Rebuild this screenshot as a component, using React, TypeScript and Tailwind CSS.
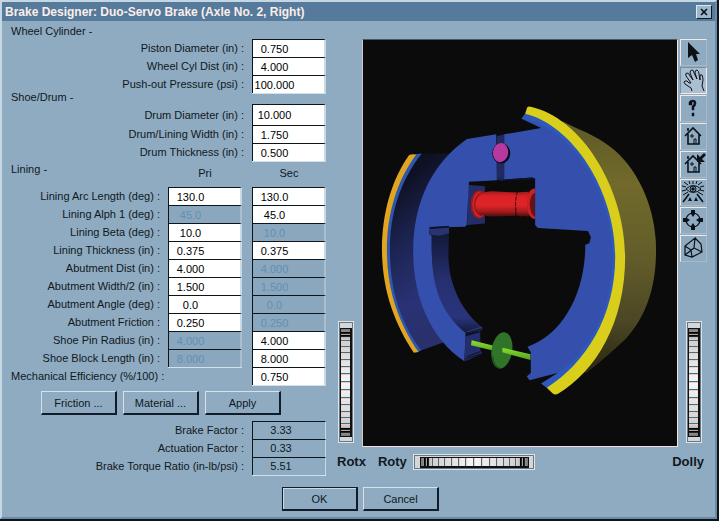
import { useState } from "react";
import type { ReactNode } from "react";
import clsx from "clsx";

interface Row {
  id: string;
  label: string;
  pri?: string;
  sec: string;
  priOff?: boolean;
  secOff?: boolean;
  tall?: boolean;
}

const wheelCylinder: Row[] = [
  { id: "piston", label: "Piston Diameter (in) :", sec: "0.750" },
  { id: "cyl-dist", label: "Wheel Cyl Dist (in) :", sec: "4.000" },
  { id: "push-out", label: "Push-out Pressure (psi) :", sec: "100.000" },
];

const shoeDrum: Row[] = [
  { id: "drum-dia", label: "Drum Diameter (in) :", sec: "10.000", tall: true },
  { id: "drum-width", label: "Drum/Lining Width (in) :", sec: "1.750" },
  { id: "drum-thick", label: "Drum Thickness (in) :", sec: "0.500" },
];

const lining: Row[] = [
  { id: "arc", label: "Lining Arc Length (deg) :", pri: "130.0", sec: "130.0" },
  { id: "alph", label: "Lining Alph 1 (deg) :", pri: "45.0", sec: "45.0", priOff: true },
  { id: "beta", label: "Lining Beta (deg) :", pri: "10.0", sec: "10.0", secOff: true },
  { id: "thick", label: "Lining Thickness (in) :", pri: "0.375", sec: "0.375" },
  { id: "ab-dist", label: "Abutment Dist (in) :", pri: "4.000", sec: "4.000", secOff: true },
  { id: "ab-width", label: "Abutment Width/2 (in) :", pri: "1.500", sec: "1.500", secOff: true },
  { id: "ab-angle", label: "Abutment Angle (deg) :", pri: "0.0", sec: "0.0", secOff: true },
  { id: "ab-fric", label: "Abutment Friction :", pri: "0.250", sec: "0.250", secOff: true },
  { id: "pin", label: "Shoe Pin Radius (in) :", pri: "4.000", sec: "4.000", priOff: true },
  { id: "block", label: "Shoe Block Length (in) :", pri: "8.000", sec: "8.000", priOff: true },
];

const results = [
  { id: "bf", label: "Brake Factor :", value: "3.33" },
  { id: "af", label: "Actuation Factor :", value: "0.33" },
  { id: "btr", label: "Brake Torque Ratio (in-lb/psi) :", value: "5.51" },
];

function Field({ id, value, off, name }: { id: string; value: string; off?: boolean; name?: string }) {
  const [text, setText] = useState(value);
  return (
    <input
      id={id}
      type="text"
      aria-label={name}
      value={text}
      disabled={off}
      onChange={(e) => setText(e.target.value)}
      className={clsx(
        "h-full w-[74px] border-t border-r-2 border-l border-t-[#0c141c] border-l-[#0c141c] pr-7 text-center shadow-[0_1px_#d3e0e8] outline-none",
        off ? "border-r-[#a9bfd0] bg-[#8ba7be] text-[#6090b4]" : "border-r-[#c9dae4] bg-white text-black"
      )}
    />
  );
}

function FieldRow({ row }: { row: Row }) {
  const two = row.pri !== undefined;
  return (
    <div className={clsx("flex items-center", row.tall ? "h-[21px]" : "h-[18px]")}>
      <label htmlFor={two ? `${row.id}-pri` : row.id} className="flex-1 pr-2 text-right">
        {row.label}
      </label>
      {two && (
        <div className="mr-[10px] h-full">
          <Field id={`${row.id}-pri`} value={row.pri!} off={row.priOff} />
        </div>
      )}
      <Field
        id={two ? `${row.id}-sec` : row.id}
        value={row.sec}
        off={row.secOff}
        name={two ? `${row.label} Sec` : undefined}
      />
    </div>
  );
}

function PushButton({ children, main }: { children: ReactNode; main?: boolean }) {
  return (
    <button
      className={clsx(
        "h-6 w-[76px] border-t border-r-2 border-b-2 border-l border-r-[#101c28] border-b-[#101c28]",
        main ? "border-t-[#101c28] border-l-[#101c28] shadow-[inset_1px_1px_#c9dae6]" : "border-t-[#d5e2ea] border-l-[#d5e2ea]"
      )}
    >
      {children}
    </button>
  );
}

const ridges = [3, 6, 11, 17, 23, 30, 37, 44, 52, 60, 68, 75, 82, 88, 94, 99, 102];

// thumb wheel, drawn upright or lying flat
function ThumbWheel({ label, flat }: { label: string; flat?: boolean }) {
  return (
    <button
      aria-label={label}
      className={clsx(
        "border border-[#f4ddd6] bg-[#d3d7da] outline-1 -outline-offset-2 outline-[#4f7f96]",
        flat ? "h-4 w-[122px]" : "h-[122px] w-4"
      )}
    >
      <svg viewBox={flat ? "0 0 120 14" : "0 0 14 120"} className="block h-full w-full" shapeRendering="crispEdges">
        <defs>
          <linearGradient id={flat ? "whH" : "whV"} x1="0" y1="0" x2={flat ? "1" : "0"} y2={flat ? "0" : "1"}>
            <stop offset="0" stopColor="#777" />
            <stop offset=".1" stopColor="#cfcfcf" />
            <stop offset=".5" stopColor="#f6f6f6" />
            <stop offset=".9" stopColor="#cfcfcf" />
            <stop offset="1" stopColor="#777" />
          </linearGradient>
        </defs>
        {flat ? (
          <>
            <rect x="6" y="2" width="109" height="11" fill="#111" />
            <rect x="7" y="3" width="107" height="8" fill="url(#whH)" />
            {ridges.map((r) => (
              <g key={r}>
                <rect x={r + 7} y="3" width="1" height="8" fill={r < 8 || r > 96 ? "#000" : "#3f7186"} />
                <rect x={r + 8} y="3" width="1" height="8" fill={r < 8 || r > 96 ? "#222" : "#f2c9bd"} />
              </g>
            ))}
          </>
        ) : (
          <>
            <rect x="1" y="6" width="12" height="109" fill="#111" />
            <rect x="2" y="7" width="9" height="107" fill="url(#whV)" />
            {ridges.map((r) => (
              <g key={r}>
                <rect x="2" y={r + 7} width="9" height="1" fill={r < 8 || r > 96 ? "#000" : "#3f7186"} />
                <rect x="2" y={r + 8} width="9" height="1" fill={r < 8 || r > 96 ? "#222" : "#f2c9bd"} />
              </g>
            ))}
          </>
        )}
      </svg>
    </button>
  );
}

function BrakeModel() {
  return (
    <svg viewBox="9 -150 945 1218" className="block h-[406px] w-full" role="img" aria-label="Duo-servo brake">
      <defs>
        <linearGradient id="inner" x1="0" y1="0" x2=".25" y2="1">
          <stop offset="0" stopColor="#0b0b0c" />
          <stop offset=".2" stopColor="#0f1226" />
          <stop offset=".5" stopColor="#1d2554" />
          <stop offset=".8" stopColor="#2a3276" />
          <stop offset="1" stopColor="#29306c" />
        </linearGradient>
        <linearGradient id="lip" x1="0" y1="0" x2="0" y2="1">
          <stop offset="0" stopColor="#10152e" />
          <stop offset=".5" stopColor="#262f70" />
          <stop offset=".85" stopColor="#2a347c" />
          <stop offset="1" stopColor="#141a3a" />
        </linearGradient>
        <linearGradient id="drum" x1="0" y1="0" x2="0" y2="1">
          <stop offset="0" stopColor="#5e5a28" />
          <stop offset=".25" stopColor="#716a2a" />
          <stop offset=".55" stopColor="#625c2a" />
          <stop offset=".8" stopColor="#4b4624" />
          <stop offset="1" stopColor="#29270f" />
        </linearGradient>
        <linearGradient id="red" x1="0" y1="0" x2="0" y2="1">
          <stop offset="0" stopColor="#a01a1c" />
          <stop offset=".2" stopColor="#dc2226" />
          <stop offset=".55" stopColor="#de2428" />
          <stop offset=".8" stopColor="#a81c1e" />
          <stop offset="1" stopColor="#4c0e10" />
        </linearGradient>
        <linearGradient id="rod" x1="0" y1="0" x2="0" y2="1">
          <stop offset="0" stopColor="#8ce02c" />
          <stop offset="1" stopColor="#4f9f22" />
        </linearGradient>
      </defs>
      <rect x="9" y="-150" width="945" height="1218" fill="#0b0b0b" />

      {/* left lining and inside of the drum */}
      <path d="M183 190L270 190L240 300L200 500L252 758L181 783C118 700 88 600 88 480C88 370 125 265 183 190Z" fill="url(#inner)" />
      <path d="M166 192L186 190C122 270 90 370 90 480C90 600 122 700 184 782L174 788C112 700 80 600 80 480C80 370 108 265 166 192Z" fill="#2d58b0" />
      <path d="M148 194Q158 190 169 193C112 270 81 370 81 480C81 600 116 700 176 787L162 789C103 700 66 600 66 475C67 370 94 270 148 194Z" fill="#e2a51f" />

      {/* drum outside */}
      <path d="M608 92C660 120 705 132 750 167C835 230 884 345 890 450C896 570 870 670 800 747C760 785 720 820 680 850L600 800L760 500L690 200Z" fill="url(#drum)" />

      {/* recess behind the wheel cylinder */}
      <path d="M412 138L434 132V270H412Z" fill="#202a62" />
      <path d="M322 275L527 264V412L318 408Z" fill="#0b0b0b" />
      <path d="M326 284L376 288V400L322 405Z" fill="#252d66" />
      <path d="M412 268L425 272L450 268L434 262H412Z" fill="#1b2458" />

      {/* primary shoe */}
      <path d="M322 146L410 132L412 270L328 275L321 405L316 410L210 412L216 440L216 480C220 600 250 670 318 728L314 815C210 745 160 620 160 485C160 330 222 215 322 146Z" fill="#344fac" />
      <path d="M209 412L268 408L266 500C268 590 310 670 368 713L362 722L318 730C250 675 216 600 216 480V438L208 432Z" fill="url(#lip)" />
      <path d="M209 414L268 410V430L240 437L210 434Z" fill="#293372" />
      <path d="M209 411L268 408V412L212 417Z" fill="#0d1126" />
      <path d="M318 726L364 710L368 714V720L324 731Z" fill="#2b3678" />
      <path d="M316 738L362 724V780L368 792L316 815Z" fill="#252e6c" />
      <path d="M318 731L366 717M318 738L362 726M322 801L362 786M318 808L366 792" stroke="#0c1024" strokeWidth="3" fill="none" />

      {/* wheel cylinder */}
      <ellipse cx="358" cy="343" rx="25" ry="42" fill="#9a1a1c" />
      <ellipse cx="362" cy="343" rx="24" ry="39" fill="#d92226" />
      <path d="M362 313Q372 304 400 303L468 307V377L400 379Q372 378 362 374Q343 360 343 343Q343 325 362 313Z" fill="url(#red)" />
      <path d="M466 307L508 305V379L470 377Z" fill="url(#red)" />
      <path d="M371 304Q345 318 345 343Q345 368 368 379" stroke="#8f1719" strokeWidth="4" fill="none" />
      <path d="M474 304Q463 340 473 376L488 382" stroke="#3c0b0c" strokeWidth="3" strokeDasharray="12 4" fill="none" />
      <path d="M527 294Q503 296 502 340Q503 384 527 387Z" fill="#c92024" />
      <path d="M527 308Q512 312 511 343Q513 375 527 380Z" fill="#651416" />

      {/* secondary shoe */}
      <path d="M434 132L545 113L486 85L497 70C640 90 770 300 770 500C770 680 690 830 562 895L545 882L594 850L510 872L502 860L514 850V788L504 771C610 735 678 610 678 464L690 460L695 442L686 423L535 414L527 405V265L518 262L434 268Z" fill="#344fac" />
      <path d="M434 268L518 262L527 268L434 271Z" fill="#0e132c" />
      <ellipse cx="425" cy="189" rx="27" ry="31" fill="#0a0c18" />
      <ellipse cx="423" cy="187" rx="23" ry="29" fill="#b7389f" transform="rotate(8 423 187)" />

      {/* secondary lining */}
      <path d="M486 85L497 70C640 100 768 300 768 500C768 680 680 830 562 895L546 882C680 815 760 670 760 500C760 310 640 110 486 85Z" fill="#2d59bd" />
      <path d="M510 48C670 80 798 300 798 500C798 700 710 845 596 913Q587 917 580 912L562 895C680 820 768 680 768 500C768 300 640 105 497 70L503 51Q506 48 510 48Z" fill="#d9ce1c" />

      {/* adjuster */}
      <path d="M336 752L430 775V790L334 767Z" fill="url(#rod)" />
      <ellipse cx="427" cy="782" rx="31" ry="55" fill="#2f7429" transform="rotate(9 427 782)" />
      <path d="M399 800A31 55 9 0 0 420 836" stroke="#1f4d1c" strokeWidth="4" fill="none" />
      <path d="M429 774L513 794V811L428 788Z" fill="url(#rod)" />
    </svg>
  );
}

const house = (
  <>
    <path d="M5 13L13 5L21 13M8 11V21H19V11M8 8V5" />
    <path d="M14 21V16H16V21M11 12h2v2h-2z" strokeWidth="1" />
  </>
);

const tools: { name: string; icon: ReactNode }[] = [
  {
    name: "Pick",
    icon: <path d="M8 3V19L12 16L15 23L18 21L16 15H20Z" fill="#0c1118" stroke="none" />,
  },
  {
    name: "Hand",
    icon: (
      <path
        strokeWidth="1"
        d="M12 24L11 21L5 17Q3 15 5 14Q7 13 9 16L11 16L6 9Q5 6 7 6Q9 6 10 9L13 13L10 6Q10 3 12 3Q14 3 14 6L17 12L15 6Q15 3 17 3Q19 4 19 7L20 13L20 9Q20 7 22 8Q23 10 23 13L22 19L24 24"
      />
    ),
  },
  {
    name: "Help",
    icon: (
      <path
        d="M9 10V7Q10 5 13 5Q16 5 16 8Q16 11 14 12V15H12V11Q14 10 14 8Q14 6 12 7V10ZM12 18H14V21H12Z"
        fill="#0c1118"
        stroke="#0c1118"
        strokeWidth=".5"
      />
    ),
  },
  { name: "Home", icon: house },
  {
    name: "Set Home",
    icon: (
      <>
        {house}
        <path d="M17 3V11H25L22 8L26 4L24 2L20 6Z" fill="#0c1118" stroke="none" />
      </>
    ),
  },
  {
    name: "View All",
    icon: (
      <>
        <path strokeWidth="1" d="M6 10Q13 3 21 10Q13 17 6 10ZM13 2V5M9 2L10 5M17 2L16 5M4 3L8 6M22 3L18 6M2 7L6 8M24 7L20 8M2 12L6 11M24 12L20 11M3 16L8 13M23 16L18 13" />
        <path strokeWidth="1.6" d="M9 15L3 23M17 15L23 23" />
        <circle cx="13" cy="10" r="3" strokeWidth="1" />
        <circle cx="13" cy="10" r="1" fill="#0c1118" />
        <path d="M10 18L12 22H8ZM16 18L18 22H14Z" fill="#0c1118" stroke="none" />
      </>
    ),
  },
  {
    name: "Seek",
    icon: (
      <>
        <circle cx="13" cy="13" r="7" strokeWidth="1.2" />
        <path d="M11 3H15V7L13 10L11 7ZM11 23H15V19L13 16L11 19ZM3 11V15H7L10 13L7 11ZM23 11V15H19L16 13L19 11Z" fill="#0c1118" stroke="none" />
      </>
    ),
  },
  {
    name: "Perspective",
    icon: <path strokeWidth="1.2" d="M15 3L21 9L22 17L12 22L5 20V11L15 3L14 13L22 17M5 20L14 13M5 11L11 15L12 22M11 15L14 13" />,
  },
];

export default function App() {
  const [tool, setTool] = useState("Hand");

  return (
    <div className="flex min-h-screen flex-col border-r-2 border-b-2 border-[#0d141c] bg-[#8fabc2] font-['Liberation_Sans',Arial,sans-serif] text-[11px] leading-4 text-[#101820]">
      <div className="flex flex-1 flex-col border-2 border-t-[#c5d7e3] border-r-[#6e8aa2] border-b-[#6e8aa2] border-l-[#c5d7e3]">
        <header className="flex h-[19px] items-center justify-between bg-[#557a9b] px-[3px]">
          <h1 className="text-[12px] font-bold text-[#fbeeea]">Brake Designer: Duo-Servo Brake (Axle No. 2, Right)</h1>
          <button
            aria-label="Close"
            className="flex h-[14px] w-4 items-center justify-center border border-t-[#dbe8f0] border-r-[#101820] border-b-[#101820] border-l-[#dbe8f0] bg-[#9cb6ca]"
          >
            <svg width="8" height="8" viewBox="0 0 8 8" stroke="#0a0f14" strokeWidth="1.6">
              <path d="M1 1L7 7M7 1L1 7" />
            </svg>
          </button>
        </header>

        <main className="flex pt-[3px] pr-2 pl-[9px]">
          <form className="w-[315px] shrink-0" onSubmit={(e) => e.preventDefault()}>
            <h2 className="leading-[15px]">Wheel Cylinder -</h2>
            {wheelCylinder.map((r) => (
              <FieldRow key={r.id} row={r} />
            ))}
            <h2 className="h-[11px] leading-2">Shoe/Drum -</h2>
            {shoeDrum.map((r) => (
              <FieldRow key={r.id} row={r} />
            ))}
            <div className="flex h-[26px]">
              <h2 className="flex-1">Lining -</h2>
              <span className="mr-[10px] w-[74px] pt-1 text-center">Pri</span>
              <span className="w-[74px] pt-1 text-center">Sec</span>
            </div>
            {lining.map((r) => (
              <FieldRow key={r.id} row={r} />
            ))}
            <div className="flex h-[18px] items-center">
              <label htmlFor="mech" className="w-[157px] pr-2 text-right whitespace-nowrap">
                Mechanical Efficiency (%/100) :
              </label>
              <div className="ml-auto h-full">
                <Field id="mech" value="0.750" />
              </div>
            </div>

            <div className="mt-[6px] flex justify-end gap-[6px] pr-[45px]">
              <PushButton>Friction ...</PushButton>
              <PushButton>Material ...</PushButton>
              <PushButton>Apply</PushButton>
            </div>

            <div className="mt-[6px]">
              {results.map((r) => (
                <div key={r.id} className="flex h-[18px] items-center">
                  <label htmlFor={r.id} className="flex-1 pr-2 text-right">
                    {r.label}
                  </label>
                  <output
                    id={r.id}
                    className="h-full w-[74px] border-t border-r border-l border-t-[#0c141c] border-r-[#c9dae4] border-l-[#0c141c] pr-4 text-center shadow-[0_1px_#d3e0e8]"
                  >
                    {r.value}
                  </output>
                </div>
              ))}
            </div>
          </form>

          <section className="ml-[11px] flex-1 pt-[15px]">
            <div className="flex">
              <div className="flex w-[25px] shrink-0 items-end pb-1 pl-px">
                <ThumbWheel label="Rotx" />
              </div>
              <div className="min-w-0 flex-1 border border-t-[#41586c] border-r-[#f6e2dc] border-b-[#f6e2dc] border-l-[#d9c9c8] bg-[#0b0b0b]">
                <BrakeModel />
              </div>
              <div className="ml-[2px] flex w-[27px] shrink-0 flex-col items-center justify-between pb-1">
                <div className="flex flex-col gap-px">
                  {tools.map((t) => (
                    <button
                      key={t.name}
                      aria-label={t.name}
                      aria-pressed={tool === t.name}
                      onClick={() => setTool(t.name)}
                      className={clsx(
                        "size-[27px] border",
                        tool === t.name
                          ? "border-t-[#7890a4] border-r-[#f3e9e6] border-b-[#f3e9e6] border-l-[#7890a4] bg-[#a9bfd0]"
                          : "border-t-[#f3e9e6] border-r-[#a9b9c6] border-b-[#a9b9c6] border-l-[#f3e9e6]"
                      )}
                    >
                      <svg viewBox="1 1 25 25" className="block h-full w-full" fill="none" stroke="#0c1118" strokeWidth="1.6">
                        {t.icon}
                      </svg>
                    </button>
                  ))}
                </div>
                <ThumbWheel label="Dolly" />
              </div>
            </div>

            <div className="mt-[7px] flex items-center pr-[3px] text-[13px] font-bold">
              <span>Rotx</span>
              <span className="mr-[6px] ml-3">Roty</span>
              <ThumbWheel label="Roty" flat />
              <span className="ml-auto">Dolly</span>
            </div>
          </section>
        </main>

        <footer className="mt-3 flex justify-center gap-[5px] pl-1">
          <PushButton main>OK</PushButton>
          <PushButton>Cancel</PushButton>
        </footer>
      </div>
    </div>
  );
}
